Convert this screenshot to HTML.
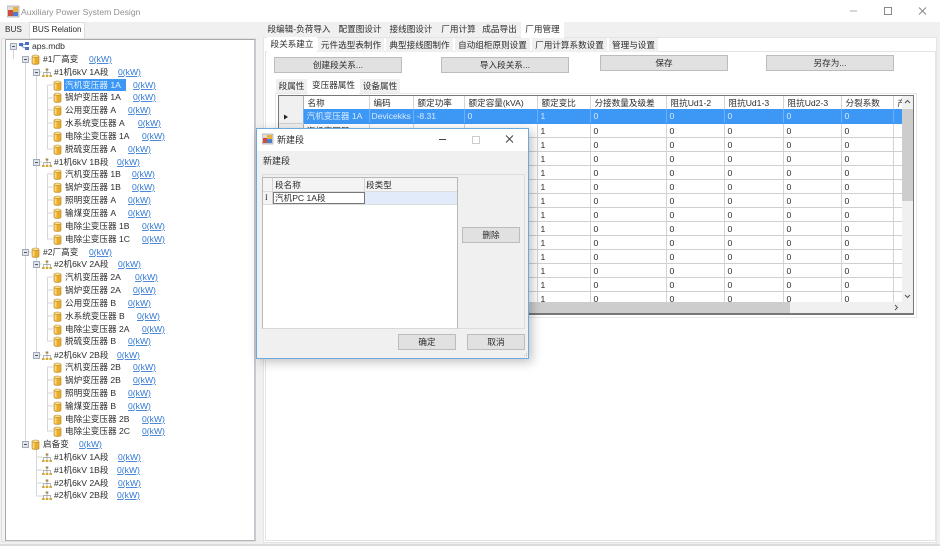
<!DOCTYPE html>
<html><head><meta charset="utf-8"><style>
html,body{margin:0;padding:0;background:#f0f0f0}
body{width:940px;height:546px;position:relative;overflow:hidden;font:8.6px "Liberation Sans","Noto Sans CJK SC",sans-serif;color:#2c2c2c}
#w{position:absolute;left:0;top:0;width:940px;height:546px;overflow:hidden;filter:blur(.3px)}
.a{position:absolute;box-sizing:border-box}
.l{position:absolute;white-space:nowrap;line-height:14px;height:14px}
.tab{position:absolute;height:14px;line-height:14px;text-align:center;background:#f0f0f0;white-space:nowrap}
.sel{background:#fff}
.btn{position:absolute;box-sizing:border-box;background:#e1e1e1;border:1px solid #bcbcbc;text-align:center;height:16px;line-height:14px}
svg{position:absolute;left:0;top:0}
svg text{font:8.6px "Liberation Sans","Noto Sans CJK SC",sans-serif;fill:#2c2c2c}
svg text.k{fill:#2f76d2;text-decoration:underline}
table{border-collapse:collapse;table-layout:fixed;position:absolute;left:0;top:0;width:623px}
td,th{box-sizing:border-box;height:14px;padding:1px 0 0 3px;border-right:1px solid #d4d4d4;border-bottom:1px solid #d0d0d0;font-weight:normal;text-align:left;white-space:nowrap;overflow:hidden;line-height:12px;font-size:8.6px;color:#2c2c2c}
th{height:13px;background:#fff;padding:0 0 0 4px;border-bottom:0}
td.h,th.h{background:#f0f0f0;padding:0;border-right:1px solid #b0b0b0}
tr.s td{background:#3c97f5;color:#d8ebff;border-right-color:#6db0f6;border-bottom-color:#3c97f5}
tr.s td.h{background:#f0f0f0;border-bottom-color:#d0d0d0}
</style></head><body><div id="w">

<!-- title bar -->
<div class="a" style="left:0;top:0;width:940px;height:22px;background:#fff"></div>
<svg width="14" height="14" style="left:7px;top:5px"><rect x="0" y="1" width="12" height="11" fill="#ddd" stroke="#999" stroke-width=".6"/><rect x="1" y="5" width="5" height="6" fill="#cf4b3a"/><rect x="6" y="2" width="5" height="5" fill="#e8b33c"/><rect x="6" y="7" width="5" height="4" fill="#4a7fd0"/></svg>
<div class="l" style="left:21px;top:5px;font-size:8.6px;color:#909090">Auxiliary Power System Design</div>
<svg width="100" height="22" style="left:840px;top:0"><path d="M10 11H17" stroke="#bbb" stroke-width="1.2"/><rect x="44.5" y="7.5" width="7" height="7" fill="none" stroke="#888"/><path d="M79 7.5L86 14.5M86 7.5L79 14.5" stroke="#888" stroke-width="1"/></svg>

<!-- left tabs & panel -->
<div class="l" style="left:5px;top:23px;font-size:8.2px">BUS</div>
<div class="tab sel" style="left:29px;top:22px;width:56px;height:16px;font-size:8.2px;border:1px solid #ddd;border-bottom:0;box-sizing:border-box;line-height:14px">BUS Relation</div>
<div class="a" style="left:1px;top:38px;width:255px;height:504px;background:#f4f4f4;border:1px solid #e0e0e0"></div>
<div class="a" style="left:5px;top:39px;width:251px;height:502px;background:#fff;border:1px solid #a8a8a8;border-right:2px solid #c8c8d0;border-bottom:1px solid #b4b4b4"></div>

<!-- tree -->
<svg width="260" height="510" viewBox="0 0 260 510" style="left:0;top:0">
<defs>
<g id="c"><path d="M1 2.2V9.2C1 10.7 8 10.7 8 9.2V2.2" fill="#e9ad2b" stroke="#b5811a" stroke-width=".6"/><ellipse cx="4.5" cy="2.2" rx="3.5" ry="1.2" fill="#f8de96" stroke="#b5811a" stroke-width=".5"/><rect x="1.5" y="3.5" width="2" height="6" fill="#f7d77f"/></g>
<g id="n"><path d="M5 1.5V4M1.5 7V4.5H8.5V7M5 4V7" fill="none" stroke="#999" stroke-width=".7"/><rect x="3.7" y="0.5" width="2.6" height="2" fill="#9a8a4a"/><rect x="0" y="7" width="2.6" height="2" fill="#d2a93a"/><rect x="3.7" y="7" width="2.6" height="2" fill="#d2a93a"/><rect x="7.4" y="7" width="2.6" height="2" fill="#d2a93a"/></g>
<g id="m"><rect x="0.5" y="0.5" width="6" height="6" fill="#dfe5ee" stroke="#8f9aa8" stroke-width=".8"/><path d="M2 3.5H5" stroke="#333" stroke-width=".8"/></g>
</defs>
<g stroke="#d6d6d6" stroke-width="1" fill="none">
<path d="M13.5 50V59M25.5 59V444.5M36.5 72V355M47.5 85V149H53M47.5 174V239H53M47.5 85H53M47.5 98H53M47.5 110H53M47.5 123H53M47.5 136H53M47.5 174H53M47.5 187H53M47.5 200H53M47.5 213H53M47.5 226H53"/>
<path d="M47.5 277V341H53M47.5 277H53M47.5 290H53M47.5 303H53M47.5 316H53M47.5 329H53M47.5 367V431H53M47.5 367H53M47.5 380H53M47.5 393H53M47.5 406H53M47.5 419H53"/>
<path d="M36.5 444V496H43M36.5 457H43M36.5 470H43M36.5 483H43M25.5 59H31M25.5 252H31M36.5 72H42M36.5 162H42M36.5 264H42M36.5 355H42"/>
</g>
<!-- aps.mdb -->
<use href="#m" x="10" y="43"/>
<g transform="translate(19,42)"><rect x="0" y="1" width="4" height="3" fill="#4a6fc4"/><rect x="6" y="0" width="4" height="3" fill="#4a6fc4"/><rect x="6" y="5" width="4" height="3" fill="#4a6fc4"/><path d="M2 4L8 7M4 2.5H6" stroke="#6a86c8" stroke-width=".8"/></g>
<text x="32" y="49">aps.mdb</text>

<use href="#m" x="22" y="56"/><use href="#c" x="31" y="54"/><text x="43" y="62">#1厂高变</text><text class="k" x="89" y="62">0(kW)</text>
<use href="#m" x="33" y="69"/><use href="#n" x="42" y="68"/><text x="54" y="75">#1机6kV 1A段</text><text class="k" x="118" y="75">0(kW)</text>
<rect x="64" y="79" width="62" height="12" fill="#3c97f5"/>
<use href="#c" x="53" y="80"/><text x="65" y="88" style="fill:#e6f2ff">汽机变压器 1A</text><text class="k" x="133" y="88">0(kW)</text>
<use href="#c" x="53" y="92"/><text x="65" y="100">锅炉变压器 1A</text><text class="k" x="133" y="100">0(kW)</text>
<use href="#c" x="53" y="105"/><text x="65" y="113">公用变压器 A</text><text class="k" x="128" y="113">0(kW)</text>
<use href="#c" x="53" y="118"/><text x="65" y="126">水系统变压器 A</text><text class="k" x="138" y="126">0(kW)</text>
<use href="#c" x="53" y="131"/><text x="65" y="139">电除尘变压器 1A</text><text class="k" x="142" y="139">0(kW)</text>
<use href="#c" x="53" y="144"/><text x="65" y="152">脱硫变压器 A</text><text class="k" x="128" y="152">0(kW)</text>
<use href="#m" x="33" y="159"/><use href="#n" x="42" y="158"/><text x="54" y="165">#1机6kV 1B段</text><text class="k" x="117" y="165">0(kW)</text>
<use href="#c" x="53" y="169"/><text x="65" y="177">汽机变压器 1B</text><text class="k" x="132" y="177">0(kW)</text>
<use href="#c" x="53" y="182"/><text x="65" y="190">锅炉变压器 1B</text><text class="k" x="132" y="190">0(kW)</text>
<use href="#c" x="53" y="195"/><text x="65" y="203">照明变压器 A</text><text class="k" x="128" y="203">0(kW)</text>
<use href="#c" x="53" y="208"/><text x="65" y="216">输煤变压器 A</text><text class="k" x="128" y="216">0(kW)</text>
<use href="#c" x="53" y="221"/><text x="65" y="229">电除尘变压器 1B</text><text class="k" x="142" y="229">0(kW)</text>
<use href="#c" x="53" y="234"/><text x="65" y="242">电除尘变压器 1C</text><text class="k" x="142" y="242">0(kW)</text>

<use href="#m" x="22" y="249"/><use href="#c" x="31" y="247"/><text x="43" y="255">#2厂高变</text><text class="k" x="89" y="255">0(kW)</text>
<use href="#m" x="33" y="261"/><use href="#n" x="42" y="260"/><text x="54" y="267">#2机6kV 2A段</text><text class="k" x="118" y="267">0(kW)</text>
<use href="#c" x="53" y="272"/><text x="65" y="280">汽机变压器 2A</text><text class="k" x="135" y="280">0(kW)</text>
<use href="#c" x="53" y="285"/><text x="65" y="293">锅炉变压器 2A</text><text class="k" x="133" y="293">0(kW)</text>
<use href="#c" x="53" y="298"/><text x="65" y="306">公用变压器 B</text><text class="k" x="128" y="306">0(kW)</text>
<use href="#c" x="53" y="311"/><text x="65" y="319">水系统变压器 B</text><text class="k" x="137" y="319">0(kW)</text>
<use href="#c" x="53" y="324"/><text x="65" y="332">电除尘变压器 2A</text><text class="k" x="142" y="332">0(kW)</text>
<use href="#c" x="53" y="336"/><text x="65" y="344">脱硫变压器 B</text><text class="k" x="128" y="344">0(kW)</text>
<use href="#m" x="33" y="352"/><use href="#n" x="42" y="351"/><text x="54" y="358">#2机6kV 2B段</text><text class="k" x="117" y="358">0(kW)</text>
<use href="#c" x="53" y="362"/><text x="65" y="370">汽机变压器 2B</text><text class="k" x="133" y="370">0(kW)</text>
<use href="#c" x="53" y="375"/><text x="65" y="383">锅炉变压器 2B</text><text class="k" x="133" y="383">0(kW)</text>
<use href="#c" x="53" y="388"/><text x="65" y="396">照明变压器 B</text><text class="k" x="128" y="396">0(kW)</text>
<use href="#c" x="53" y="401"/><text x="65" y="409">输煤变压器 B</text><text class="k" x="128" y="409">0(kW)</text>
<use href="#c" x="53" y="414"/><text x="65" y="422">电除尘变压器 2B</text><text class="k" x="142" y="422">0(kW)</text>
<use href="#c" x="53" y="426"/><text x="65" y="434">电除尘变压器 2C</text><text class="k" x="142" y="434">0(kW)</text>

<use href="#m" x="22" y="441"/><use href="#c" x="31" y="439"/><text x="43" y="447">启备变</text><text class="k" x="79" y="447">0(kW)</text>
<use href="#n" x="42" y="453"/><text x="54" y="460">#1机6kV 1A段</text><text class="k" x="118" y="460">0(kW)</text>
<use href="#n" x="42" y="466"/><text x="54" y="473">#1机6kV 1B段</text><text class="k" x="117" y="473">0(kW)</text>
<use href="#n" x="42" y="479"/><text x="54" y="486">#2机6kV 2A段</text><text class="k" x="118" y="486">0(kW)</text>
<use href="#n" x="42" y="491"/><text x="54" y="498">#2机6kV 2B段</text><text class="k" x="117" y="498">0(kW)</text>
</svg>

<!-- right side tabs -->
<div class="a" style="left:263px;top:37px;width:674px;height:506px;background:#fff;border:1px solid #e4e4e4"></div>
<div class="tab" style="left:267px;top:22px;width:64px">段编辑-负荷导入</div>
<div class="tab" style="left:338px;top:22px;width:44px">配置图设计</div>
<div class="tab" style="left:389px;top:22px;width:44px">接线图设计</div>
<div class="tab" style="left:441px;top:22px;width:35px">厂用计算</div>
<div class="tab" style="left:482px;top:22px;width:35px">成品导出</div>
<div class="tab sel" style="left:521px;top:22px;width:43px;height:16px">厂用管理</div>

<div class="a" style="left:265px;top:51px;width:671px;height:490px;background:#fff;border:1px solid #e4e4e4"></div>
<div class="tab sel" style="left:267px;top:37px;width:50px;height:15px">段关系建立</div>
<div class="tab" style="left:318px;top:38px;width:66px">元件选型表制作</div>
<div class="tab" style="left:386px;top:38px;width:67px">典型接线图制作</div>
<div class="tab" style="left:455px;top:38px;width:75px">自动组柜原则设置</div>
<div class="tab" style="left:532px;top:38px;width:75px">厂用计算系数设置</div>
<div class="tab" style="left:609px;top:38px;width:49px">管理与设置</div>

<div class="btn" style="left:274px;top:57px;width:128px">创建段关系...</div>
<div class="btn" style="left:441px;top:57px;width:128px">导入段关系...</div>
<div class="btn" style="left:600px;top:55px;width:128px">保存</div>
<div class="btn" style="left:766px;top:55px;width:128px">另存为...</div>

<div class="a" style="left:275px;top:93px;width:642px;height:225px;border:1px solid #e8e8e8"></div>
<div class="tab" style="left:276px;top:79px;width:31px">段属性</div>
<div class="tab sel" style="left:308px;top:78px;width:51px;height:16px">变压器属性</div>
<div class="tab" style="left:360px;top:79px;width:40px">设备属性</div>

<!-- data grid -->
<div class="a" style="left:278px;top:95px;width:636px;height:220px;background:#fff;border:1px solid #777;border-bottom:2px solid #777;overflow:hidden">
<div class="a" style="left:0;top:0;width:623px;height:206px;overflow:hidden">
<table><colgroup><col style="width:24px"><col style="width:66px"><col style="width:44px"><col style="width:51px"><col style="width:73px"><col style="width:53px"><col style="width:76px"><col style="width:58px"><col style="width:59px"><col style="width:58px"><col style="width:52px"><col style="width:9px"></colgroup>
<tr style="height:13px"><th class="h"></th><th>名称</th><th>编码</th><th>额定功率</th><th>额定容量(kVA)</th><th>额定变比</th><th>分接数量及级差</th><th>阻抗Ud1-2</th><th>阻抗Ud1-3</th><th>阻抗Ud2-3</th><th>分裂系数</th><th>产</th></tr>
<tr class="s"><td class="h"></td><td>汽机变压器 1A</td><td style="padding-left:2px">Devicekks</td><td>-8.31</td><td>0</td><td>1</td><td>0</td><td>0</td><td>0</td><td>0</td><td>0</td><td></td></tr>
<tr><td class="h"></td><td>汽机变压器</td><td></td><td></td><td></td><td>1</td><td>0</td><td>0</td><td>0</td><td>0</td><td>0</td><td></td></tr>
<tr><td class="h"></td><td></td><td></td><td></td><td></td><td>1</td><td>0</td><td>0</td><td>0</td><td>0</td><td>0</td><td></td></tr>
<tr><td class="h"></td><td></td><td></td><td></td><td></td><td>1</td><td>0</td><td>0</td><td>0</td><td>0</td><td>0</td><td></td></tr>
<tr><td class="h"></td><td></td><td></td><td></td><td></td><td>1</td><td>0</td><td>0</td><td>0</td><td>0</td><td>0</td><td></td></tr>
<tr><td class="h"></td><td></td><td></td><td></td><td></td><td>1</td><td>0</td><td>0</td><td>0</td><td>0</td><td>0</td><td></td></tr>
<tr><td class="h"></td><td></td><td></td><td></td><td></td><td>1</td><td>0</td><td>0</td><td>0</td><td>0</td><td>0</td><td></td></tr>
<tr><td class="h"></td><td></td><td></td><td></td><td></td><td>1</td><td>0</td><td>0</td><td>0</td><td>0</td><td>0</td><td></td></tr>
<tr><td class="h"></td><td></td><td></td><td></td><td></td><td>1</td><td>0</td><td>0</td><td>0</td><td>0</td><td>0</td><td></td></tr>
<tr><td class="h"></td><td></td><td></td><td></td><td></td><td>1</td><td>0</td><td>0</td><td>0</td><td>0</td><td>0</td><td></td></tr>
<tr><td class="h"></td><td></td><td></td><td></td><td></td><td>1</td><td>0</td><td>0</td><td>0</td><td>0</td><td>0</td><td></td></tr>
<tr><td class="h"></td><td></td><td></td><td></td><td></td><td>1</td><td>0</td><td>0</td><td>0</td><td>0</td><td>0</td><td></td></tr>
<tr><td class="h"></td><td></td><td></td><td></td><td></td><td>1</td><td>0</td><td>0</td><td>0</td><td>0</td><td>0</td><td></td></tr>
<tr><td class="h"></td><td></td><td></td><td></td><td></td><td>1</td><td>0</td><td>0</td><td>0</td><td>0</td><td>0</td><td></td></tr>
</table></div>
<svg width="24" height="30" style="left:0;top:0"><path d="M5 18.5L9 21L5 23.5Z" fill="#222"/></svg>
<!-- v scrollbar -->
<div class="a" style="left:623px;top:0;width:11px;height:206px;background:#f0f0f0"></div>
<div class="a" style="left:623px;top:13px;width:11px;height:92px;background:#cdcdcd"></div>
<svg width="11" height="206" style="left:623px;top:0"><path d="M3 7L5.5 4.5L8 7" fill="none" stroke="#555"/><path d="M3 199L5.5 201.5L8 199" fill="none" stroke="#555"/></svg>
<!-- h scrollbar -->
<div class="a" style="left:0;top:206px;width:634px;height:11px;background:#f0f0f0"></div>
<div class="a" style="left:24px;top:206px;width:487px;height:11px;background:#cdcdcd"></div>
<svg width="11" height="11" style="left:612px;top:206px"><path d="M4 3L6.5 5.5L4 8" fill="none" stroke="#555"/></svg>
</div>

<!-- dialog -->
<div class="a" style="left:256px;top:128px;width:273px;height:231px;background:#f0f0f0;border:1px solid #6ea9dc;box-shadow:3px 3px 10px rgba(0,0,0,.25)">
<div class="a" style="left:0;top:0;width:271px;height:22px;background:#fff"></div>
<svg width="14" height="14" style="left:5px;top:4px"><rect x="0" y="1" width="11" height="10" fill="#ddd" stroke="#999" stroke-width=".6"/><rect x="1" y="5" width="4" height="5" fill="#cf4b3a"/><rect x="5" y="2" width="5" height="4" fill="#e8b33c"/><rect x="5" y="6" width="5" height="4" fill="#4a7fd0"/></svg>
<div class="l" style="left:20px;top:4px;font-size:9px">新建段</div>
<svg width="100" height="22" style="left:172px;top:0"><path d="M10 10.5H17" stroke="#444"/><rect x="43.5" y="7.5" width="7" height="7" fill="none" stroke="#ccc"/><path d="M77 6.5L84 13.5M84 6.5L77 13.5" stroke="#444"/></svg>
<div class="l" style="left:6px;top:25px;font-size:9px">新建段</div>
<div class="a" style="left:5px;top:45px;width:263px;height:155px;border:1px solid #dcdcdc"></div>
<div class="a" style="left:5px;top:48px;width:196px;height:152px;background:#fff;border:1px solid #b8b8b8;border-bottom:1px solid #d8d8d8">
  <div class="a" style="left:0;top:0;width:194px;height:14px;background:#f4f4f4;border-bottom:1px solid #ddd"></div>
  <div class="a" style="left:9px;top:0;width:1px;height:26px;background:#d4d4d4"></div>
  <div class="a" style="left:101px;top:0;width:1px;height:14px;background:#d4d4d4"></div>
  <div class="l" style="left:12px;top:0">段名称</div>
  <div class="l" style="left:103px;top:0">段类型</div>
  <div class="a" style="left:0;top:14px;width:9px;height:12px;background:#f4f4f4"></div>
  <div class="a" style="left:10px;top:14px;width:184px;height:12px;background:#e2ebfa"></div>
  <div class="a" style="left:0;top:26px;width:194px;height:1px;background:#ddd"></div>
  <div class="l" style="left:2px;top:13px;font-family:'Liberation Serif',serif;font-size:8px">I</div>
  <div class="a" style="left:10px;top:14px;width:92px;height:12px;background:#fff;border:1px solid #777"></div>
  <div class="l" style="left:12px;top:13px">汽机PC 1A段</div>
</div>
<div class="btn" style="left:205px;top:98px;width:58px">删除</div>
<div class="btn" style="left:141px;top:205px;width:58px">确定</div>
<div class="btn" style="left:210px;top:205px;width:58px">取消</div>
<svg width="6" height="6" style="left:265px;top:223px"><path d="M4 1h1v1H4zM2 3h1v1H2zM4 3h1v1H4z" fill="#bbb"/></svg>
</div>

<div class="a" style="left:0;top:544px;width:940px;height:2px;background:#dcdcdc"></div>
</div></body></html>
